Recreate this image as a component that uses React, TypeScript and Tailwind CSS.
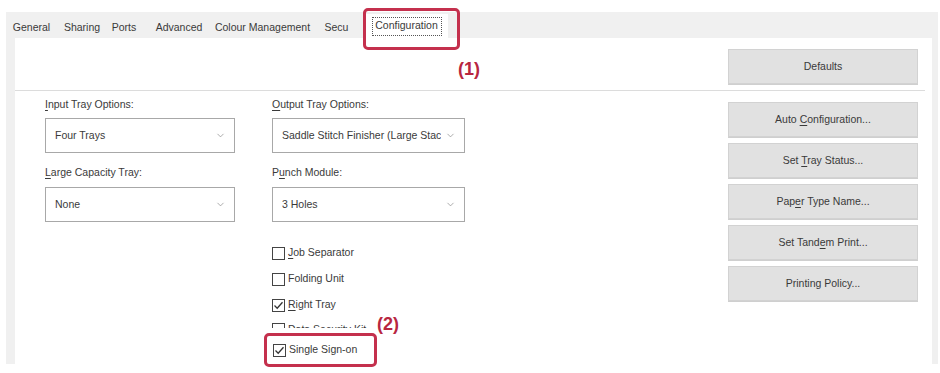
import { ChevronDown } from "lucide-react";

// access-key label: underlines one letter
function Key({ text, at }: { text: string; at: number }) {
  return (
    <span className="whitespace-pre">
      {text.slice(0, at)}
      <span className="underline underline-offset-2">{text[at]}</span>
      {text.slice(at + 1)}
    </span>
  );
}

function Select({ value, width }: { value: string; width: string }) {
  return (
    <div className={`${width} h-[35px] bg-white border border-[#a8a8a8] flex items-center pl-[9px] pr-[8px]`}>
      <span className="flex-1 whitespace-nowrap overflow-hidden text-[#3a3a3a]">{value}</span>
      <ChevronDown size={11} strokeWidth={1.5} className="text-[#888] ml-1 shrink-0" />
    </div>
  );
}

function Check({ checked }: { checked?: boolean }) {
  return (
    <div className="w-[13px] h-[13px] border border-[#444] bg-white flex items-center justify-center shrink-0">
      {checked && (
        <svg width="11" height="11" viewBox="0 0 11 11">
          <path d="M1.5 5.5 L4.2 8.2 L9.5 2.2" fill="none" stroke="#333" strokeWidth="1.3" />
        </svg>
      )}
    </div>
  );
}

function Btn({ children }: { children: React.ReactNode }) {
  return (
    <div className="w-[190px] h-[35px] bg-[#e1e1e1] border border-[#d2d2d2] shadow-[0_1px_0_#cfcfcf] flex items-center justify-center text-[10.5px] text-[#3a3a3a]">
      <span className="whitespace-pre">{children}</span>
    </div>
  );
}

const tabs: [string, string][] = [
  ["General", "w-[51px]"],
  ["Sharing", "w-[50px]"],
  ["Ports", "w-[34px]"],
  ["Advanced", "w-[76px]"],
  ["Colour Management", "w-[91px]"],
  ["Secu", "w-[57px]"],
];

export default function App() {
  return (
    <div className="w-[940px] h-[373px] bg-white relative overflow-hidden font-['Liberation_Sans',Arial,sans-serif]">
      <div className="ml-[6px] mt-[12px] w-[932px] h-[352px] bg-[#f0f0f0] flex flex-col">
        {/* tab strip */}
        <div className="h-[26px] flex items-stretch text-[10.5px] text-[#3a3a3a]">
          {tabs.map(([t, w]) => (
            <div key={t} className={`${w} flex items-center justify-center pt-[5px] whitespace-nowrap`}>
              {t}
            </div>
          ))}
          <div className="w-[83px] mt-[2px] bg-white flex items-center justify-center">
            <div className="w-[70px] h-[19px] border border-dotted border-[#555] flex items-center justify-center">
              Configuration
            </div>
          </div>
        </div>

        {/* page */}
        <div className="ml-[9px] mr-[6px] flex-1 bg-white flex flex-col">
          <div className="h-[52px] flex justify-end pt-[11px] pr-[14px]">
            <Btn>Defaults</Btn>
          </div>
          <div className="h-px bg-[#dcdcdc] mr-[7px]" />

          <div className="flex-1 flex">
            <div className="flex-1 pl-[30px] pt-[6px] flex gap-[37px] text-[10.5px] text-[#3a3a3a]">
              <div className="w-[190px] flex flex-col">
                <div className="h-[14px] leading-[14px] mb-[7px]"><Key text="Input Tray Options:" at={0} /></div>
                <Select value="Four Trays" width="w-[190px]" />
                <div className="h-[14px] leading-[14px] mt-[12px] mb-[8px]"><Key text="Large Capacity Tray:" at={0} /></div>
                <Select value="None" width="w-[190px]" />
              </div>
              <div className="w-[193px] flex flex-col">
                <div className="h-[14px] leading-[14px] mb-[7px]"><Key text="Output Tray Options:" at={0} /></div>
                <Select value="Saddle Stitch Finisher (Large Stack)" width="w-[193px]" />
                <div className="h-[14px] leading-[14px] mt-[12px] mb-[8px]"><Key text="Punch Module:" at={1} /></div>
                <Select value="3 Holes" width="w-[193px]" />

                <div className="mt-[18px] flex flex-col">
                  <div className="h-[26px] flex items-center gap-[3px]"><Check /><Key text="Job Separator" at={0} /></div>
                  <div className="h-[26px] flex items-center gap-[3px]"><Check /><span>Folding Unit</span></div>
                  <div className="h-[26px] flex items-center gap-[3px]"><Check checked /><Key text="Right Tray" at={0} /></div>
                  <div className="h-[5px] overflow-hidden mt-[5px]">
                    <div className="flex items-start gap-[3px] h-[13px] leading-[13px]"><Check /><span>Data Security Kit</span></div>
                  </div>
                </div>
              </div>
            </div>

            <div className="w-[204px] pt-[11px] flex flex-col gap-[6px]">
              <Btn>Auto <Key text="Configuration..." at={0} /></Btn>
              <Btn>Set <Key text="Tray Status..." at={0} /></Btn>
              <Btn><Key text="Paper Type Name..." at={3} /></Btn>
              <Btn>Set <Key text="Tandem Print..." at={4} /></Btn>
              <Btn>Printing Policy...</Btn>
            </div>
          </div>
        </div>
      </div>

      {/* annotation (1) */}
      <div className="absolute left-[363px] top-[8px] w-[97px] h-[42px] border-[3px] border-[#c4304d] rounded-[5px]" />
      <div className="absolute left-[458px] top-[56px] text-[18px] font-bold text-[#b8263f]">(1)</div>

      {/* annotation (2) */}
      <div className="absolute left-[264px] top-[333px] w-[113px] h-[34px] border-[3px] border-[#c4304d] rounded-[5px] bg-white flex items-center pl-[6px] gap-[3px] text-[10.5px] text-[#3a3a3a]">
        <Check checked />
        <span>Single Sign-on</span>
      </div>
      <div className="absolute left-[377px] top-[311px] text-[18px] font-bold text-[#b8263f]">(2)</div>
    </div>
  );
}
